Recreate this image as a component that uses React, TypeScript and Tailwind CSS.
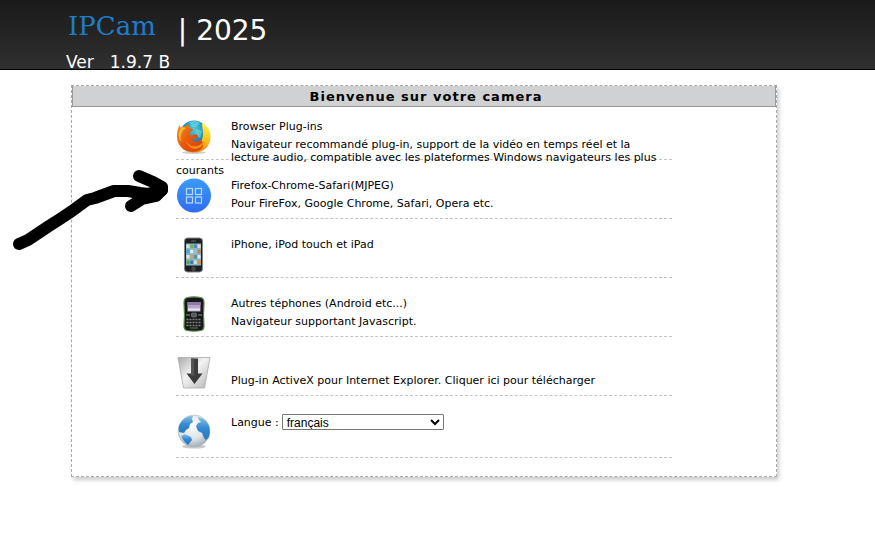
import type { ReactNode } from "react";

function FirefoxIcon() {
  return (
    <svg viewBox="0 0 36 36" className="size-9" aria-hidden="true">
      <defs>
        <radialGradient id="globe" cx="0.5" cy="0.3" r="0.7">
          <stop offset="0" stopColor="#4fd0dc" />
          <stop offset="0.6" stopColor="#1c86b8" />
          <stop offset="1" stopColor="#134a85" />
        </radialGradient>
        <linearGradient id="fox" x1="0" y1="0.2" x2="1" y2="0.9">
          <stop offset="0" stopColor="#f08a1c" />
          <stop offset="0.45" stopColor="#e8560f" />
          <stop offset="1" stopColor="#d2460a" />
        </linearGradient>
        <linearGradient id="tail" x1="0.6" y1="0" x2="0.4" y2="1">
          <stop offset="0" stopColor="#fff04a" />
          <stop offset="0.5" stopColor="#fcc419" />
          <stop offset="1" stopColor="#f0780f" />
        </linearGradient>
      </defs>
      <ellipse cx="18" cy="33.500" rx="12" ry="1.500" fill="#ccc" />
      <circle cx="18" cy="15.500" r="14" fill="url(#globe)" />
      <path d="M13 3c4-2 9-1 11 1l-4 4-4 0zM20 10l6 2-2 7-5-3z" fill="#70dce0" opacity="0.6" />
      <path d="M26 4c6 3 9 8 8.500 15C34 28 27 33.500 18 33.500 10 33.500 4 29 2 22l9-1c2 4 5 5 9 4 5-1 7-5 7-10 0-4-1-8-1-11z" fill="url(#tail)" />
      <path d="M4 6c0 2 1 3 1 3 1-1 3-2 5-2 1-1 3-2 4-2-1 1-2 3-1 4l4 1c0 2-2 2-4 4 0 2 2 3 4 2 3-1 4-1 5 1-1 3-4 4-7 3 2 3 7 3 10 1 2 2 3 5 1 8-4 5-15 5-20 0C2 25 .500 20 1 15 1.500 11 2 8 4 6z" fill="url(#fox)" />
      <path d="M5 9c-3 4-3 10 0 14-1-6 0-11 5-14-2-1-4-1-5 0z" fill="#fbb829" />
      <path d="M10 22c4 7 13 7 18 0-1 9-14 12-18 0z" fill="#f78b18" />
    </svg>
  );
}

function AppsIcon() {
  return (
    <svg viewBox="0 0 36 36" className="size-9" aria-hidden="true">
      <defs>
        <linearGradient id="apps" x1="0" y1="0" x2="0" y2="1">
          <stop offset="0" stopColor="#3b9bf7" />
          <stop offset="1" stopColor="#2f6cf0" />
        </linearGradient>
      </defs>
      <circle cx="18" cy="17.500" r="17" fill="url(#apps)" />
      <g fill="none" stroke="#b9d8ff" strokeWidth="1.200">
        <rect x="10.500" y="10.500" width="6" height="6" />
        <rect x="19.500" y="10.500" width="6" height="6" />
        <rect x="10.500" y="19" width="6" height="6" />
        <rect x="19.500" y="19" width="6" height="6" />
      </g>
    </svg>
  );
}

function IphoneIcon() {
  const apps = [
    ["#d9e4e6", "#7cb34a", "#4b86c9", "#e8ddb0"],
    ["#4aa3d8", "#e9eef0", "#8bc3dd", "#cc7a4a"],
    ["#dfe8e9", "#c7a26a", "#508bb5", "#e5e9ea"],
    ["#54a653", "#3279c9", "#d7dcdd", "#e08b2c"],
  ];
  return (
    <svg viewBox="0 0 36 36" className="size-9" aria-hidden="true">
      <rect x="8.500" y="1" width="18" height="34" rx="3" fill="#1d2022" stroke="#85898b" />
      <rect x="15" y="3.500" width="5" height="1" rx="0.500" fill="#666" />
      <rect x="10" y="6.500" width="15" height="22" fill="#8fb4bd" />
      {apps.map((row, y) =>
        row.map((color, x) => (
          <rect key={`${y}-${x}`} x={10.5 + x * 3.7} y={7.5 + y * 5.3} width="3" height="3.500" rx="0.600" fill={color} />
        )),
      )}
      <circle cx="17.500" cy="31.700" r="1.800" fill="#3b3f42" stroke="#777" strokeWidth="0.500" />
    </svg>
  );
}

function KeyboardPhoneIcon() {
  return (
    <svg viewBox="0 0 36 36" className="size-9" aria-hidden="true">
      <path d="M10 2c5-1.500 11-1.500 16 0 2 1 2 3 2 5l-.5 12 .5 11c0 3-1 4-3 4.500-5 .8-9 .8-14 0-2-.5-3-2-3-4.500l.5-11L8 7c0-2 0-4 2-5z" fill="#16191a" stroke="#5c8544" strokeWidth="1.200" />
      <rect x="11.500" y="6" width="13" height="9.500" fill="#b9a4cc" />
      <path d="M11.500 6h13v3h-13z" fill="#8d7aa6" />
      <path d="M12 12.500h12v2H12z" fill="#eee6f2" />
      <rect x="15.500" y="17" width="5" height="4" rx="1" fill="#55595b" stroke="#999" strokeWidth="0.500" />
      <path d="M10 19h4M22 19h4" stroke="#8d8f92" strokeWidth="1.200" />
      <g stroke="#85827f" strokeWidth="1.600" strokeDasharray="2 1">
        <path d="M10.500 23.500h15M10.500 26.500h15M10.500 29.500h15" />
      </g>
      <path d="M14 32h8" stroke="#777" />
    </svg>
  );
}

function DownloadIcon() {
  return (
    <svg viewBox="0 0 36 36" className="size-9" aria-hidden="true">
      <defs>
        <linearGradient id="bin" x1="0" y1="0" x2="1" y2="1">
          <stop offset="0" stopColor="#a9a9a9" />
          <stop offset="0.450" stopColor="#f2f2f2" />
          <stop offset="1" stopColor="#b5b5b5" />
        </linearGradient>
      </defs>
      <path d="M2 2.500h32L28.500 33h-21z" fill="url(#bin)" stroke="#aaa" strokeWidth="0.800" />
      <path d="M15 3.500h7v15h4.500l-8 10.500-8-10.500H15z" fill="#3c3c3c" />
      <path d="M15 3.500h3v17h-3z" fill="#555" />
    </svg>
  );
}

function GlobeIcon() {
  return (
    <svg viewBox="0 0 36 36" className="size-9" aria-hidden="true">
      <defs>
        <radialGradient id="ocean" cx="0.420" cy="0.300" r="0.750">
          <stop offset="0" stopColor="#ffffff" />
          <stop offset="0.600" stopColor="#dde3e8" />
          <stop offset="1" stopColor="#9aa5ae" />
        </radialGradient>
        <linearGradient id="land" x1="0" y1="0" x2="0" y2="1">
          <stop offset="0" stopColor="#8cc0e0" />
          <stop offset="0.500" stopColor="#3289d2" />
          <stop offset="1" stopColor="#2b79bd" />
        </linearGradient>
      </defs>
      <ellipse cx="18" cy="32.500" rx="12" ry="2" fill="#c9c9c9" />
      <circle cx="18" cy="17" r="16" fill="url(#ocean)" stroke="#a4b4c0" strokeWidth="0.600" />
      <path d="M6 7C9 3 13 1.500 17 2l-1 3 1 3-3 2-1 4-3 2-2 3-5-1C2 14 3 10 6 7z" fill="url(#land)" />
      <path d="M22 3c5 1 9 4 11 9 1 3 1 7 0 11l-3 3-2-2-2-5-4-2-2-5 2-3 3-1-2-2z" fill="url(#land)" />
      <path d="M5 22l4-2 6 3 1 3-4 5C9 29 7 26 5 22z" fill="url(#land)" />
    </svg>
  );
}

function Row({ icon, children, className = "h-[59px]" }: { icon: ReactNode; children: ReactNode; className?: string }) {
  return (
    <li className={`border-b border-dashed border-[#c4c4c4] pr-3 ${className}`}>
      <div className="float-left mt-px w-[55px]">{icon}</div>
      {children}
    </li>
  );
}

function ScribbledArrow() {
  return (
    <svg viewBox="0 0 170 90" className="pointer-events-none absolute left-0 top-[165px] h-[90px] w-[170px]" aria-hidden="true">
      <g fill="none" stroke="#000" strokeWidth="12" strokeLinecap="round" strokeLinejoin="round">
        <path d="M19 79l9-4 21-14 11-7 12-8 15-11 8-2 19-7 14 0 12 2 8 1 14-4" />
        <path d="M139 11l14 6 9 5v3l-6 6-14 3-11 7" />
        <path d="M138 34l18-5" />
      </g>
    </svg>
  );
}

export default function App() {
  return (
    <div className="relative pb-[68px] font-['DejaVu_Sans',Verdana,sans-serif] text-[11px] leading-[13px] text-black">
      <header className="h-[70px] border-b border-black bg-linear-to-b from-[#1a1a1a] to-[#303030] pl-[66px] text-white">
        <div className="flex h-[53px] items-start gap-[22px]">
          <span className="pl-[2px] font-['DejaVu_Serif',serif] text-[26px] leading-[52px] text-[#1e7cc8]">IPCam</span>
          <h1 className="text-[28px] leading-[62px]">| 2025</h1>
        </div>
        <p className="flex gap-4 text-[17px] leading-[18px]">
          <span>Ver</span>
          <span>1.9.7 B</span>
        </p>
      </header>

      <main className="mt-[15px] mr-[98px] ml-[71px] border border-dashed border-[#aaa] pb-[18px] shadow-[2px_3px_4px_#ccc]">
        <h2 className="border border-t-0 border-[#999] bg-[#d0d1d3] pt-px pl-1 text-center text-[13px] leading-[19px] font-bold tracking-[1px]">
          Bienvenue sur votre camera
        </h2>
        <ul className="mx-auto w-[496px] max-w-full">
          <Row icon={<FirefoxIcon />} className="h-[53px] pt-[11px]">
            <a href="#plugins" className="block leading-[18px]">Browser Plug-ins</a>
            <p className="pt-[2px]">
              Navigateur recommandé plug-in, support de la vidéo en temps réel et la lecture audio, compatible avec les
              plateformes Windows navigateurs les plus courants
            </p>
          </Row>
          <Row icon={<AppsIcon />} className="h-[59px] pt-[17px]">
            <a href="#mjpeg" className="block leading-[18px]">
              Firefox-Chrome-Safari(MJPEG)
              <br />
              Pour FireFox, Google Chrome, Safari, Opera etc.
            </a>
          </Row>
          <Row icon={<IphoneIcon />} className="h-[59px] pt-[17px]">
            <a href="#iphone" className="block leading-[18px]">iPhone, iPod touch et iPad</a>
          </Row>
          <Row icon={<KeyboardPhoneIcon />} className="h-[59px] pt-[17px]">
            <a href="#mobile" className="block leading-[18px]">
              Autres téphones (Android etc...)
              <br />
              Navigateur supportant Javascript.
            </a>
          </Row>
          <Row icon={<DownloadIcon />} className="h-[59px] pt-[17px]">
            <a href="#activex" className="block pt-[18px] leading-[18px]">
              Plug-in ActiveX pour Internet Explorer. Cliquer ici pour télécharger
            </a>
          </Row>
          <Row icon={<GlobeIcon />} className="h-[62px] pt-[17px]">
            <div className="flex items-center gap-[3px] pt-px">
              <label htmlFor="language">Langue :</label>
              <select
                id="language"
                defaultValue="fr"
                className="h-4 w-[162px] rounded-[1px] border border-[#767676] bg-white font-['Liberation_Sans',Arial,sans-serif] text-[12px] leading-[14px]"
              >
                <option value="fr">français</option>
                <option value="en">English</option>
              </select>
            </div>
          </Row>
        </ul>
      </main>
      <ScribbledArrow />
    </div>
  );
}
